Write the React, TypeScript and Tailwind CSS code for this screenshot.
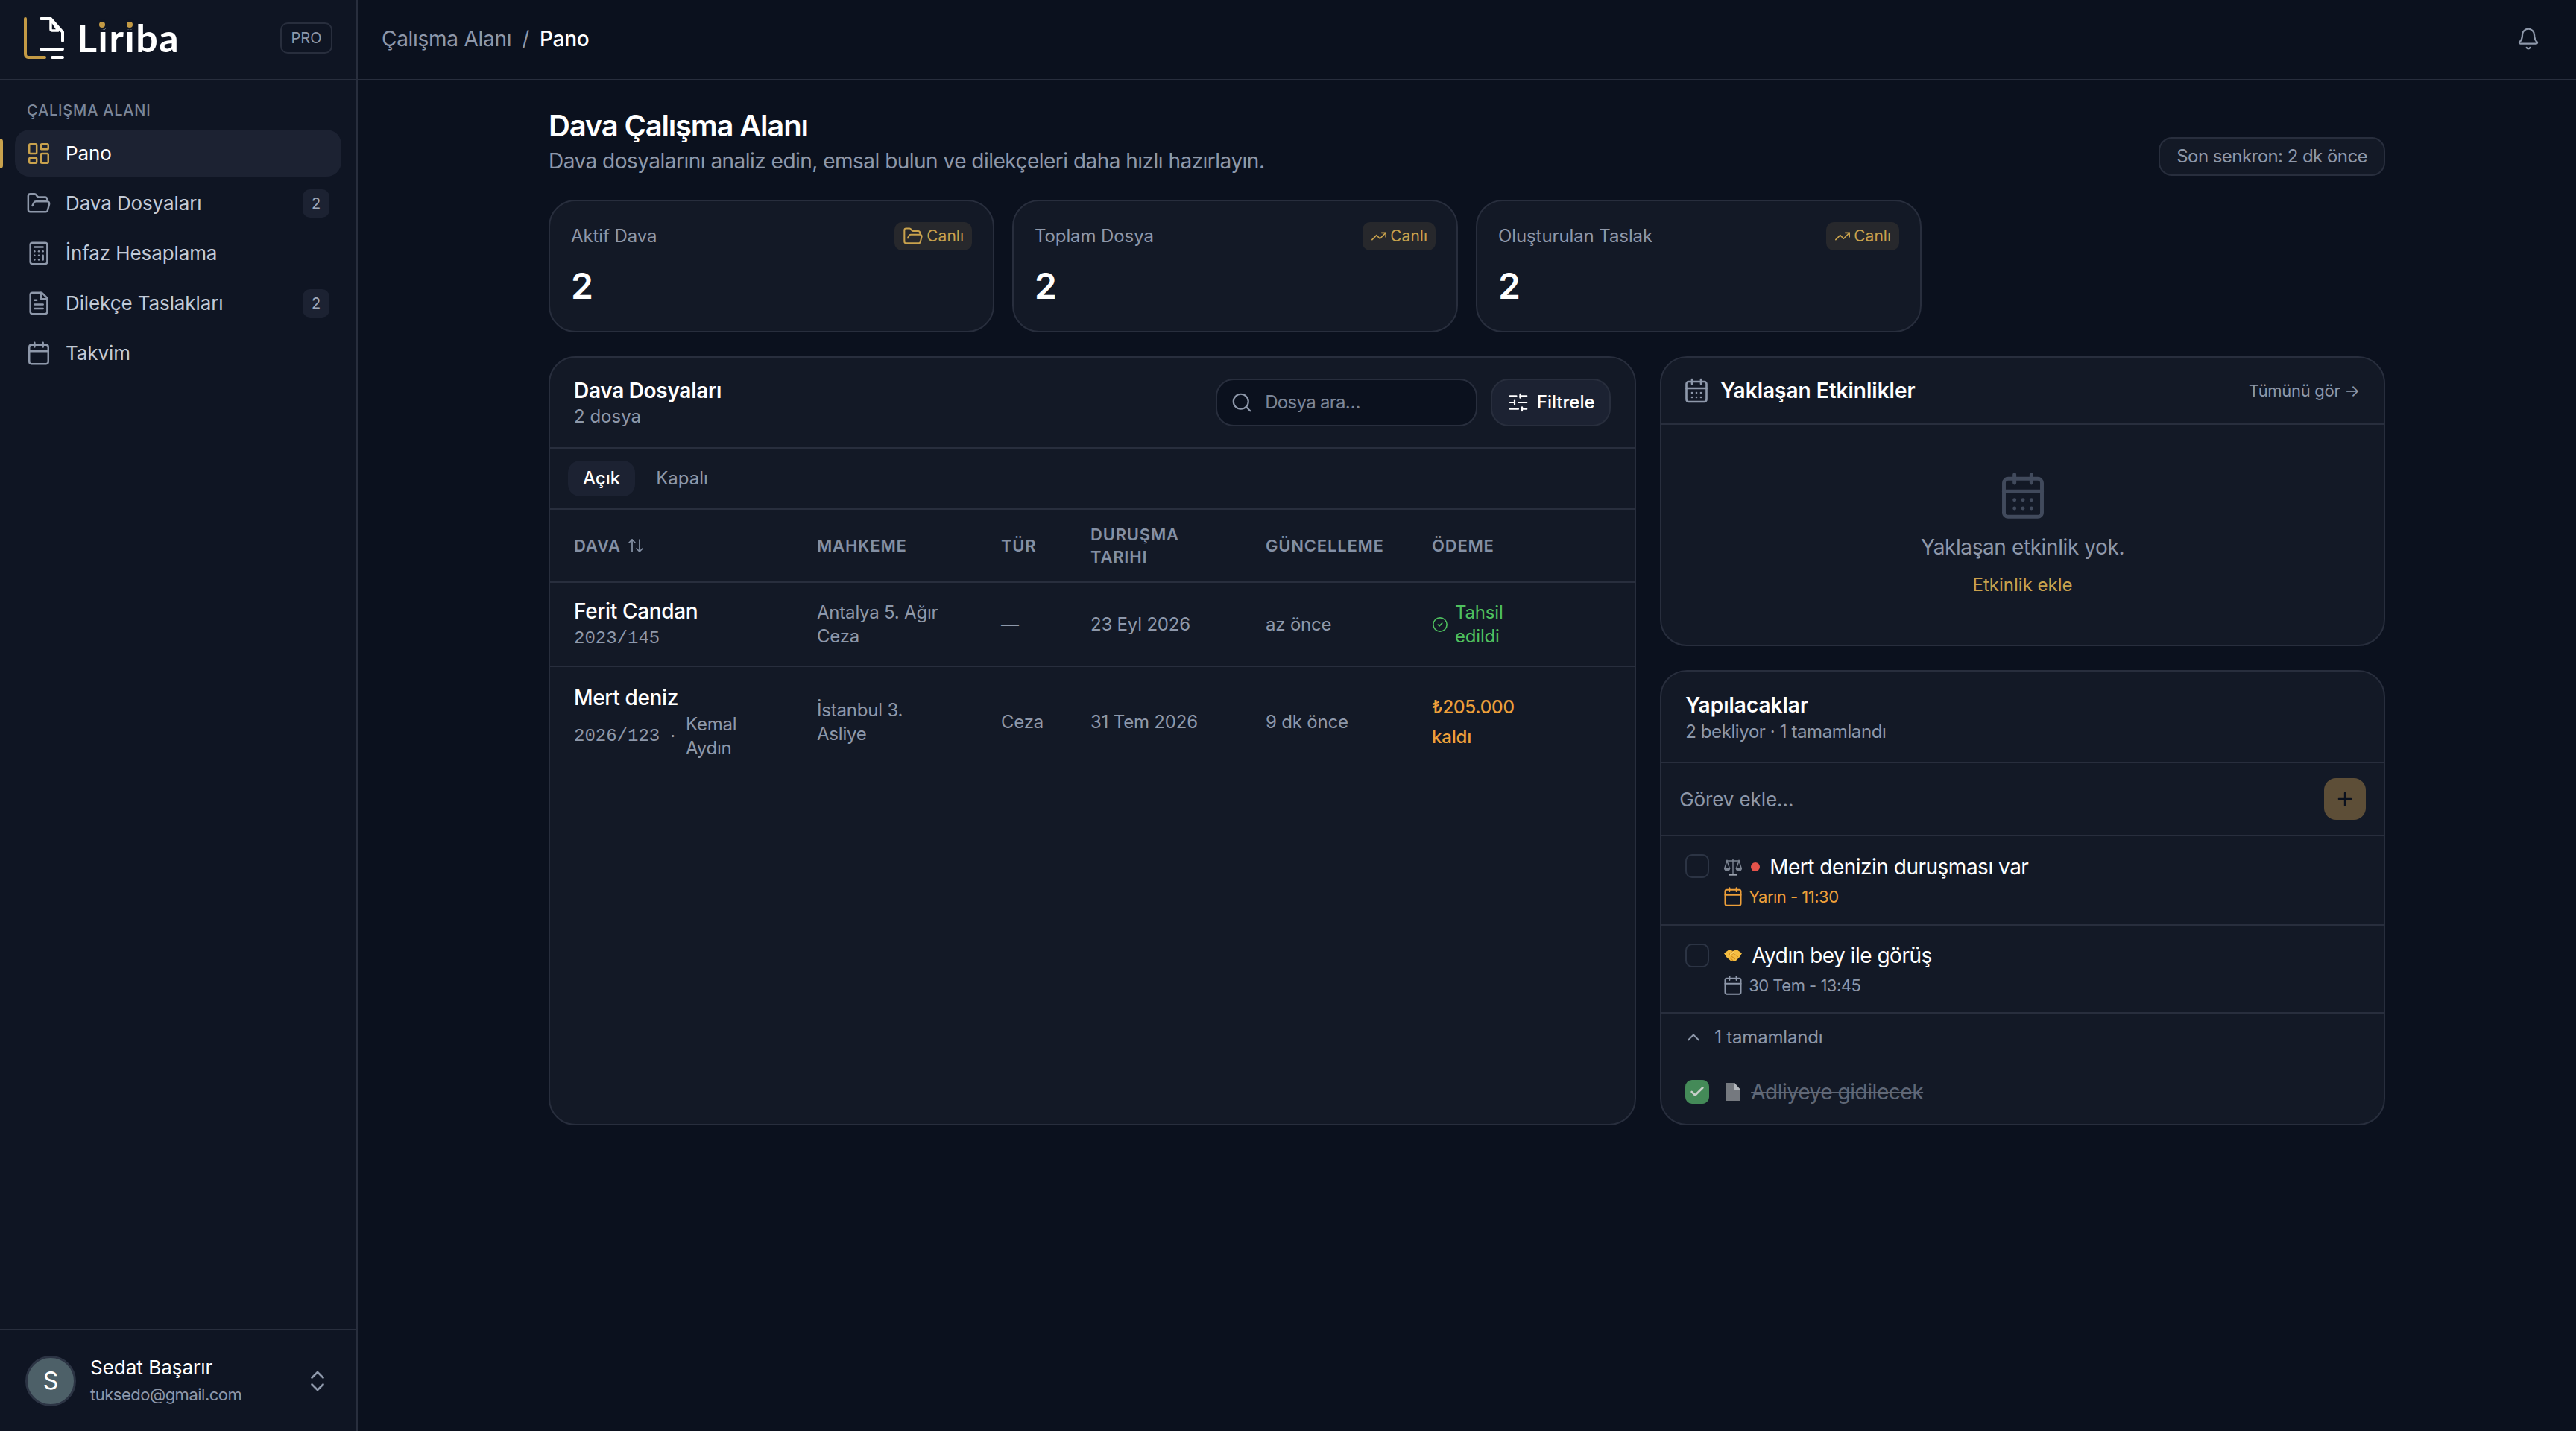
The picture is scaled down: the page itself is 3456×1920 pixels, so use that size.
import {
  ArrowUpDown,
  Bell,
  Calculator,
  Calendar,
  CalendarDays,
  Check,
  ChevronUp,
  ChevronsUpDown,
  CircleCheck,
  FileText,
  FolderOpen,
  LayoutDashboard,
  Plus,
  Search,
  SlidersHorizontal,
  TrendingUp,
} from "lucide-react";

const navItems = [
  { label: "Pano", icon: LayoutDashboard, active: true },
  { label: "Dava Dosyaları", icon: FolderOpen, badge: "2" },
  { label: "İnfaz Hesaplama", icon: Calculator },
  { label: "Dilekçe Taslakları", icon: FileText, badge: "2" },
  { label: "Takvim", icon: Calendar },
];

const stats = [
  { label: "Aktif Dava", icon: FolderOpen, iconSize: 28 },
  { label: "Toplam Dosya", icon: TrendingUp, iconSize: 22 },
  { label: "Oluşturulan Taslak", icon: TrendingUp, iconSize: 22 },
];

const Logo = () => (
  <div className="flex items-center gap-[17px]">
    <svg width="54" height="56" viewBox="0 0 54 56" fill="none" strokeLinecap="round" strokeLinejoin="round" strokeWidth="4">
      <path d="M2 2V50a4 4 0 0 0 4 4H28" stroke="#c39a45" />
      <path d="M23 2H36L52 20V32" stroke="#fff" />
      <path d="M36 2L46 18H38a2 2 0 0 1-2-2Z" stroke="#fff" strokeWidth="3.5" />
      <path d="M23 43H52M38 54H52" stroke="#fff" />
    </svg>
    <div className="relative -mt-[2px] font-['Lato',sans-serif] text-[52px] leading-[52px] font-bold tracking-[1.6px] text-white">
      Liriba
      <span className="absolute left-[30px] top-[5px] size-[8px] rounded-full bg-[#c39a45] ring-[3px] ring-[#0f1523]" />
      <span className="absolute left-[67px] top-[5px] size-[8px] rounded-full bg-[#c39a45] ring-[3px] ring-[#0f1523]" />
    </div>
  </div>
);

const Sidebar = () => (
  <aside className="flex w-[480px] shrink-0 flex-col border-r-2 border-[#282e3d] bg-[#0f1523]">
    <div className="flex h-[108px] shrink-0 items-center justify-between border-b-2 border-[#282e3d] pb-[5px] pl-[32px] pr-[32px]">
      <Logo />
      <span className="flex h-[42px] w-[70px] items-center justify-center rounded-[10px] border-2 border-[#282e3d] text-[20px] text-[#8e98aa]">
        PRO
      </span>
    </div>
    <nav className="flex-1 px-[20px] pt-[26px]">
      <div className="mb-[12px] pl-[16px] text-[20px] leading-[28px] font-medium tracking-[0.8px] text-[#7c8698]">ÇALIŞMA ALANI</div>
      <ul className="flex flex-col gap-[4px]">
        {navItems.map((item) => (
          <li
            key={item.label}
            className={`relative flex h-[63px] items-center gap-[19px] rounded-[20px] pl-[15px] pr-[16px] text-[26px] tracking-[-0.1px] ${
              item.active ? "bg-[#1c2232] text-white" : "text-[#c3cad6]"
            }`}
          >
            {item.active && <span className="absolute -left-[20px] top-[12px] h-[40px] w-[4px] rounded-r-[4px] bg-[#c9a24d]" />}
            <item.icon size={34} strokeWidth={1.75} color={item.active ? "#c9a24d" : "#8e98aa"} />
            <span className="flex-1">{item.label}</span>
            {item.badge && (
              <span className="flex h-[38px] w-[36px] items-center justify-center rounded-[10px] bg-[#1c2232] text-[20px] text-[#a0a9b9]">
                {item.badge}
              </span>
            )}
          </li>
        ))}
      </ul>
    </nav>
    <div className="flex h-[137px] shrink-0 items-center border-t-2 border-[#282e3d] pl-[34px] pr-[34px]">
      <div className="flex size-[68px] shrink-0 items-center justify-center rounded-full border-[3px] border-[#2c3444] bg-[#4d6068] text-[32px] text-white">S</div>
      <div className="ml-[19px] flex-1">
        <div className="text-[26px] leading-[36px] text-white">Sedat Başarır</div>
        <div className="text-[22px] leading-[36px] tracking-[-0.5px] text-[#8e98aa]">tuksedo@gmail.com</div>
      </div>
      <ChevronsUpDown size={36} strokeWidth={1.75} color="#8e98aa" />
    </div>
  </aside>
);

const StatCard = ({ stat }: { stat: (typeof stats)[number] }) => (
  <div className="h-[178px] rounded-[36px] border-2 border-[#282e3d] bg-[#131926] px-[28px] pt-[28px]">
    <div className="flex h-[38px] items-center justify-between">
      <span className="text-[24px] tracking-[-0.1px] text-[#8e98aa]">{stat.label}</span>
      <span className="flex h-[38px] items-center gap-[4px] rounded-[10px] bg-[#27282c] px-[11px] text-[21px] text-[#c9a24d]">
        <stat.icon size={stat.iconSize} strokeWidth={1.75} />
        Canlı
      </span>
    </div>
    <div className="mt-[20px] text-[48px] leading-[56px] font-semibold text-white">2</div>
  </div>
);

const thClass = "pl-[32px] text-left text-[22px] leading-[30px] font-semibold tracking-[0.8px] text-[#8490a4]";
const tdClass = "pl-[32px] text-[24px] leading-[32px] tracking-[-0.2px] text-[#8e98aa]";

const CaseTable = () => (
  <section className="flex flex-col overflow-hidden rounded-[36px] border-2 border-[#282e3d] bg-[#131926]">
    <div className="flex h-[122px] items-center justify-between border-b-2 border-[#282e3d] pl-[32px] pr-[32px]">
      <div>
        <h2 className="text-[28px] leading-[38px] font-semibold tracking-[-0.3px] text-white">Dava Dosyaları</h2>
        <p className="text-[24px] leading-[32px] text-[#8e98aa]">2 dosya</p>
      </div>
      <div className="flex items-center gap-[18px]">
        <div className="flex h-[64px] w-[351px] items-center gap-[16px] rounded-[24px] border-2 border-[#282e3d] bg-[#0b111e] px-[18px]">
          <Search size={30} strokeWidth={1.75} color="#8e98aa" />
          <span className="text-[24px] tracking-[-0.7px] text-[#7c8698]">Dosya ara…</span>
        </div>
        <button className="flex h-[64px] w-[161px] items-center justify-center gap-[10px] rounded-[24px] border-2 border-[#282e3d] bg-[#1c2232] text-[24px] font-medium text-white">
          <SlidersHorizontal size={30} strokeWidth={1.75} />
          Filtrele
        </button>
      </div>
    </div>
    <div className="flex h-[82px] items-center gap-[8px] border-b-2 border-[#282e3d] pl-[24px]">
      <span className="flex h-[48px] items-center rounded-[16px] bg-[#1c2232] px-[20px] text-[24px] font-medium text-white">Açık</span>
      <span className="flex h-[48px] items-center px-[20px] text-[24px] text-[#8e98aa]">Kapalı</span>
    </div>
    <table className="w-full table-fixed border-collapse">
      <colgroup>
        <col className="w-[326px]" />
        <col className="w-[247px]" />
        <col className="w-[120px]" />
        <col className="w-[235px]" />
        <col className="w-[223px]" />
        <col />
      </colgroup>
      <thead>
        <tr className="h-[97px] border-b-2 border-[#282e3d]">
          <th className={thClass}>
            <span className="flex items-center gap-[8px]">
              DAVA <ArrowUpDown size={24} strokeWidth={1.75} color="#8490a4" />
            </span>
          </th>
          <th className={thClass}>MAHKEME</th>
          <th className={thClass}>TÜR</th>
          <th className={thClass}>
            DURUŞMA
            <br />
            TARIHI
          </th>
          <th className={thClass}>GÜNCELLEME</th>
          <th className={thClass}>ÖDEME</th>
        </tr>
      </thead>
      <tbody>
        <tr className="h-[113px] border-b-2 border-[#282e3d]">
          <td className={tdClass}>
            <div className="text-[28px] leading-[36px] font-medium tracking-[-0.35px] text-white">Ferit Candan</div>
            <div className="mt-[2px] font-['Liberation_Mono',monospace] leading-[34px] tracking-normal">2023/145</div>
          </td>
          <td className={tdClass}>
            Antalya 5. Ağır
            <br />
            Ceza
          </td>
          <td className={tdClass}>—</td>
          <td className={tdClass}>23 Eyl 2026</td>
          <td className={tdClass}>az önce</td>
          <td className={tdClass}>
            <div className="flex items-center gap-[9px] text-[#4fc15f]">
              <CircleCheck size={22} strokeWidth={1.75} />
              <span>
                Tahsil
                <br />
                edildi
              </span>
            </div>
          </td>
        </tr>
        <tr className="h-[148px]">
          <td className={tdClass}>
            <div className="text-[28px] leading-[36px] font-medium tracking-[-0.35px] text-white">Mert deniz</div>
            <div className="mt-[2px] flex items-center gap-[14px]">
              <span className="font-['Liberation_Mono',monospace] tracking-normal">2026/123</span>
              <span>·</span>
              <span>
                Kemal
                <br />
                Aydın
              </span>
            </div>
          </td>
          <td className={tdClass}>
            İstanbul 3.
            <br />
            Asliye
          </td>
          <td className={tdClass}>Ceza</td>
          <td className={tdClass}>31 Tem 2026</td>
          <td className={tdClass}>9 dk önce</td>
          <td className={`${tdClass} text-[#eea03a]`}>
            <div className="leading-[40px] font-medium">
              ₺205.000
              <br />
              kaldı
            </div>
          </td>
        </tr>
      </tbody>
    </table>
  </section>
);

const Scales = () => (
  <svg width="24" height="23" viewBox="0 0 24 23" fill="none" stroke="#7e8694" strokeWidth="1.4">
    <path d="M12 1V20M3 3H21" />
    <path d="M4 3L0.7 13H7.5ZM20 3L16.5 13H23.3Z" />
    <path d="M0.7 13a3.4 3 0 0 0 6.8 0ZM16.5 13a3.4 3 0 0 0 6.8 0Z" fill="#7e8694" />
    <path d="M6 21.5H18" strokeWidth="2.4" stroke="#9aa1ad" />
  </svg>
);

const Handshake = () => (
  <svg width="24" height="17" viewBox="0 0 24 17">
    <path d="M0 5L7 0L12 2L17 0L24 5L21 10L15 16H10L3 10Z" fill="#f5bd41" />
    <path d="M12 2L7 6L9 8L13 5L19 10" fill="#fbd467" stroke="#d4901f" strokeWidth="1" />
    <path d="M10 9L15 13M8 11L12 15" fill="none" stroke="#d4901f" strokeWidth="1.2" />
  </svg>
);

const Page = () => (
  <svg width="20" height="24" viewBox="0 0 20 24">
    <path d="M0 0H12L20 9V24H0Z" fill="#75797f" />
    <path d="M12 0L20 9H12Z" fill="#b4b8bd" />
  </svg>
);

const TodoPanel = () => (
  <section className="flex flex-1 flex-col overflow-hidden rounded-[36px] border-2 border-[#282e3d] bg-[#131926]">
    <div className="h-[123px] border-b-2 border-[#282e3d] pl-[32px] pt-[26px]">
      <h2 className="text-[28px] leading-[38px] font-semibold text-white">Yapılacaklar</h2>
      <p className="mt-[1px] text-[24px] leading-[32px] tracking-[-0.4px] text-[#8e98aa]">2 bekliyor · 1 tamamlandı</p>
    </div>
    <div className="flex h-[98px] items-center justify-between border-b-2 border-[#282e3d] pl-[24px] pr-[24px]">
      <span className="text-[26px] tracking-[-0.1px] text-[#8e98aa]">Görev ekle…</span>
      <button className="flex size-[56px] items-center justify-center rounded-[16px] bg-[#5d4e37] text-[#0b111e]">
        <Plus size={28} />
      </button>
    </div>
    <div className="flex h-[120px] gap-[20px] border-b-2 border-[#282e3d] pl-[32px] pt-[23px]">
      <span className="mt-[1px] size-[32px] rounded-[9px] border-2 border-[#2c3444]" />
      <div>
        <div className="flex h-[36px] items-center text-[28px] tracking-[-0.5px] text-white">
          <Scales />
          <span className="ml-[12px] size-[12px] rounded-full bg-[#e5534b]" />
          <span className="ml-[13px]">Mert denizin duruşması var</span>
        </div>
        <div className="mt-[7px] -ml-[2px] flex items-center gap-[7px] text-[22px] leading-[30px] tracking-[-0.5px] text-[#eea03a]">
          <Calendar size={28} strokeWidth={1.75} />
          Yarın - 11:30
        </div>
      </div>
    </div>
    <div className="flex h-[118px] gap-[20px] border-b-2 border-[#282e3d] pl-[32px] pt-[22px]">
      <span className="mt-[2px] size-[32px] rounded-[9px] border-2 border-[#2c3444]" />
      <div>
        <div className="flex h-[36px] items-center gap-[13px] text-[28px] tracking-[-0.5px] text-white">
          <Handshake />
          Aydın bey ile görüş
        </div>
        <div className="mt-[7px] -ml-[2px] flex items-center gap-[7px] text-[22px] leading-[30px] tracking-[-0.5px] text-[#8e98aa]">
          <Calendar size={28} strokeWidth={1.75} />
          30 Tem - 13:45
        </div>
      </div>
    </div>
    <div className="flex items-center gap-[14px] pl-[29px] pt-[17px] text-[24px] leading-[30px] tracking-[-0.2px] text-[#8e98aa]">
      <ChevronUp size={28} strokeWidth={1.75} />1 tamamlandı
    </div>
    <div className="flex items-center pl-[32px] pt-[40px]">
      <span className="flex size-[32px] items-center justify-center rounded-[9px] bg-[#448a58] text-[#c8cfca]">
        <Check size={22} strokeWidth={3} />
      </span>
      <span className="ml-[22px]">
        <Page />
      </span>
      <span className="ml-[14px] text-[28px] leading-[36px] tracking-[-0.45px] text-[#5f6776] line-through">Adliyeye gidilecek</span>
    </div>
  </section>
);

const EventsPanel = () => (
  <section className="h-[389px] rounded-[36px] border-2 border-[#282e3d] bg-[#131926]">
    <div className="flex h-[90px] items-center justify-between border-b-2 border-[#282e3d] pl-[29px] pr-[32px]">
      <div className="flex items-center gap-[14px]">
        <CalendarDays size={36} strokeWidth={1.75} color="#8e98aa" />
        <h2 className="text-[28px] font-semibold text-white">Yaklaşan Etkinlikler</h2>
      </div>
      <span className="text-[22px] tracking-[-0.3px] text-[#8e98aa]">Tümünü gör →</span>
    </div>
    <div className="flex flex-col items-center pt-[61px]">
      <CalendarDays size={68} strokeWidth={1.75} color="#414a5c" />
      <p className="mt-[15px] text-[28px] leading-[40px] tracking-[-0.4px] text-[#8e98aa]">Yaklaşan etkinlik yok.</p>
      <p className="mt-[15px] text-[24px] leading-[32px] text-[#c9a24d]">Etkinlik ekle</p>
    </div>
  </section>
);

export default function App() {
  return (
    <div className="flex h-[1920px] bg-[#0b111e] font-['Inter',sans-serif]">
      <Sidebar />
      <div className="flex min-w-0 flex-1 flex-col">
        <header className="flex h-[108px] shrink-0 items-center justify-between border-b-2 border-[#282e3d] pb-[2px] pl-[32px] pr-[48px] text-[28px] tracking-[-0.28px]">
          <div className="flex items-center gap-[14px]">
            <span className="text-[#8e98aa]">Çalışma Alanı</span>
            <span className="text-[#8e98aa]">/</span>
            <span className="font-medium text-white">Pano</span>
          </div>
          <Bell size={32} strokeWidth={1.75} color="#8e98aa" />
        </header>
        <main className="mx-auto w-[2464px] pt-[35px]">
          <div className="flex items-end justify-between">
            <div>
              <h1 className="text-[40px] leading-[52px] font-semibold tracking-[-1.2px] text-white">Dava Çalışma Alanı</h1>
              <p className="mt-[1px] text-[28px] leading-[40px] tracking-[-0.52px] text-[#8e98aa]">
                Dava dosyalarını analiz edin, emsal bulun ve dilekçeleri daha hızlı hazırlayın.
              </p>
            </div>
            <span className="flex h-[52px] items-center rounded-[18px] border-2 border-[#282e3d] bg-[#131926] px-[22px] text-[24px] tracking-[-0.55px] text-[#8e98aa]">
              Son senkron: 2 dk önce
            </span>
          </div>
          <div className="mt-[32px] grid grid-cols-4 gap-[24px]">
            {stats.map((stat) => (
              <StatCard key={stat.label} stat={stat} />
            ))}
          </div>
          <div className="mt-[32px] grid h-[1032px] grid-cols-[3fr_2fr] gap-[32px]">
            <CaseTable />
            <div className="flex flex-col gap-[32px]">
              <EventsPanel />
              <TodoPanel />
            </div>
          </div>
        </main>
      </div>
    </div>
  );
}
